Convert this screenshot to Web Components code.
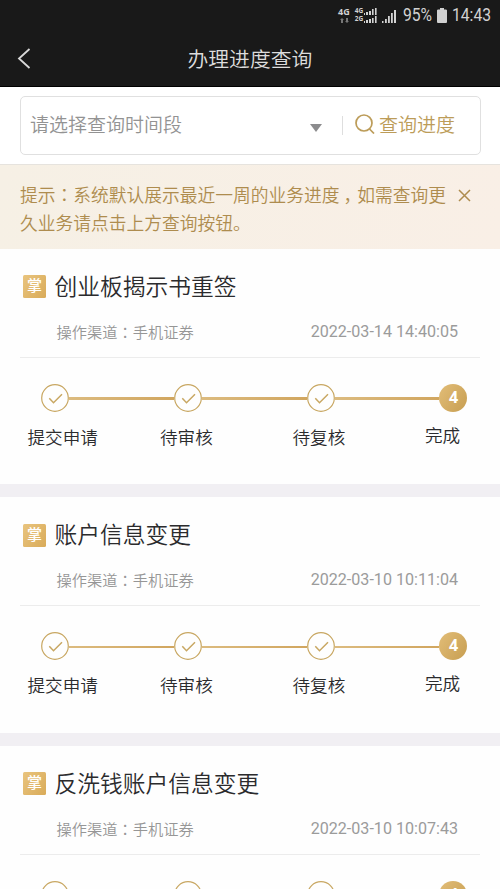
<!DOCTYPE html>
<html lang="zh-CN">
<head>
<meta charset="utf-8">
<title>办理进度查询</title>
<style>
html,body{margin:0;height:889px;overflow:hidden;background:#fefefe}
body{font-family:Roboto,"Noto Sans CJK SC",sans-serif;color:#2b2b2d}
</style>
</head>
<body>
<progress-app></progress-app>
<script>
const define = (name, html, setup) => customElements.define(name, class extends HTMLElement {
  connectedCallback() {
    if (this.shadowRoot) return;
    const t = document.createElement('template');
    t.innerHTML = html;
    this.attachShadow({mode: 'open'}).append(t.content.cloneNode(true));
    if (setup) setup(this, this.shadowRoot);
  }
});

define('status-bar', `
<style>
:host{display:flex;height:30px;box-sizing:border-box;padding:0 9px 0 338px;align-items:center;color:#d2d2d2;font-size:18px;line-height:30px;white-space:nowrap}
svg{display:block;flex:none}
.net{width:13px;font:700 9px/10px "Open Sans",sans-serif;margin-top:-1px}
.net svg{margin:1px 0 0 2px}
.dual{width:10px;margin-left:5px;font:700 6.5px/8px "Open Sans",sans-serif}
.pct{width:29px;margin-left:6px}.time{margin-left:6px}
.fit{display:inline-block;transform-origin:0 50%;transform:scaleX(.87)}
</style>
<div class="net">4G<svg width="9" height="5" viewBox="0 0 9 5" fill="#777"><path d="M2 0 4 2H3v3H1V2H0zM6 0h2v3h1L7 5 5 3h1z"/></svg></div>
<div class="dual">4G<br>2G</div>
<svg width="14" height="17" viewBox="0 0 14 17" fill="#d2d2d2"><path d="M1 6h1v2H1zM3 5h2v3H3zM6 4h2v4H6zM9 2h1.6v6H9zM12 1h1.6v7H12zM1 14h1v2H1zM3 13h2v3H3zM6 12h2v4H6zM9 11h1.6v5H9zM12 9h1.6v7H12z"/></svg>
<svg style="margin-left:5px" width="15" height="17" viewBox="0 0 15 17" fill="#d2d2d2"><path d="M0 14h1.500v2H0zM3 12h1.800v4H3zM6 9h1.800v7H6zM9 6h1.800v10H9zM12 3h2v13H12z"/></svg>
<div class="pct"><span class="fit">95%</span></div>
<svg style="margin-left:5px" width="10" height="15" viewBox="0 0 10 15" fill="#d0d0d0"><path d="M3 0h4v1.5h2.2l.8.8v12l-.7.7H.7L0 14.300V2.300l.8-.8H3z"/></svg>
<div class="time" style="margin-left:5px"><span class="fit">14:43</span></div>`);

define('nav-bar', `
<style>
:host{display:flex;height:57px;align-items:center;color:#ddd}
svg{margin-left:17px;display:block;flex:none}
h1{font-size:20.8px;font-weight:350;line-height:30px;margin:2px 0 0 156.5px;white-space:nowrap}
</style>
<svg width="14" height="22" viewBox="0 0 14 22" fill="none" stroke="#d8d8d8" stroke-width="1.8"><path d="M12.500 1 2 10.500l10.500 9.500"/></svg>
<h1><slot></slot></h1>`);

define('search-box', `
<style>
:host{display:block;padding:9px 19px 9px 20px;border-bottom:1px solid #e6e3de;background:#fff}
.box{display:flex;align-items:center;height:57px;border:1px solid #e0e0e0;border-radius:5px;font-size:19px;line-height:28px;font-weight:350;white-space:nowrap;color:#939393}
.ph{width:280px;padding-left:9px}
.tri{width:0;border:6px solid transparent;border-top:8px solid #8c8c8e;border-bottom:0;margin:4px 0 0}
.sep{width:1px;height:19px;background:#dedede;margin:0 12px 0 19.500px}
.go{color:#bc9c59;margin-left:4.500px}
svg{display:block;margin-top:-3px}
</style>
<div class="box"><div class="ph">请选择查询时间段</div><div class="tri"></div><div class="sep"></div>
<svg width="20" height="20" viewBox="0 0 20 20" fill="none" stroke="#bc9c59" stroke-width="1.7"><circle cx="9" cy="9" r="8"/><path d="m14.500 15 4.500 4.500"/></svg>
<div class="go">查询进度</div></div>`);

define('notice-bar', `
<style>
:host{display:flex;height:84px;box-sizing:border-box;padding:15px 20px 0;background:linear-gradient(100deg,#f6f0e5,#f9efe6);color:#ae8c4e;font-size:17.75px;line-height:28px;font-weight:350}
p{margin:0;width:438px;white-space:nowrap}
.p{font-family:"Noto Sans CJK TC",sans-serif}
.comma{display:inline-block;transform:translateX(4px)}
svg{display:block;margin-top:9px;flex:none}
</style>
<p>提示<span class="p" lang="zh-TW">：</span>系统默认展示最近一周的业务进度<span class="comma">，</span>如需查询更<br>久业务请点击上方查询按钮。</p>
<svg width="13" height="13" viewBox="0 0 13 13" stroke="#ae8c4e" stroke-width="1.5"><path d="m1 1 11 11M12 1 1 12"/></svg>`);

define('step-node', `
<style>
:host{display:block;width:28px;height:28px;flex:none}
svg{display:block}
.n{width:28px;height:28px;border-radius:50%;background:linear-gradient(125deg,#e2bd78,#c79e51);color:#fff;font:700 16px/27px "Open Sans",sans-serif;text-align:center}
</style>`, (el, root) => {
  const n = el.getAttribute('number');
  root.innerHTML += n ? `<div class="n">${n}</div>` :
    `<svg width="28" height="28" viewBox="0 0 28 28" fill="none" stroke="#c8a762"><circle cx="14" cy="14" r="13.300" stroke-width="1.200"/><path d="m8.300 14.200 4.200 4.500 8.500-8.500" stroke-width="1.500"/></svg>`;
});

define('step-track', `
<style>
:host{display:block;padding:26px 12.500px 0 21px}
.line{display:flex;align-items:center}
i{flex:1;height:2.500px;margin-top:2px;background:linear-gradient(90deg,#dcbb7f,#d1a65f)}
.labels{display:grid;grid-template-columns:132.5px 132.5px 132.500px 40px;margin:12px 0 0 -13.5px;font-size:17.6px;line-height:28px;font-weight:350;white-space:nowrap}
.labels :last-child{margin-top:-2px}
:host([collapsed]) .labels{display:none}
</style>
<div class="line"><step-node></step-node><i></i><step-node></step-node><i></i><step-node></step-node><i></i><step-node number="4"></step-node></div>
<div class="labels"><span>提交申请</span><span>待审核</span><span>待复核</span><span>完成</span></div>`);

define('progress-card', `
<style>
:host{display:block;height:248.5px;box-sizing:border-box;padding:21px 20px 0;border-bottom:13px solid #f1eff3;background:#fefefe}
.head{display:flex;align-items:center;height:34px;padding-left:3px}
.badge{width:23px;height:23px;border-radius:1.5px;background:linear-gradient(125deg,#e9c47e,#d9ab59);color:#fff;font-size:15px;line-height:23px;text-align:center;font-weight:500}
h2{font-size:22.750px;line-height:34px;margin:2px 0 0 8.500px;font-weight:350;white-space:nowrap}
.meta{display:flex;justify-content:space-between;padding:0 22px 0 36.500px;margin-top:15px;height:24px;font-size:15.25px;line-height:24px;color:#969696;font-weight:350;white-space:nowrap}
.date{font-size:16.100px;font-weight:400;color:#9b9b9b;margin-top:1px}
.p{font-family:"Noto Sans CJK TC",sans-serif}
hr{border:0;height:1px;background:#ececec;margin:14px 0 0}
</style>
<div class="head"><div class="badge">掌</div><h2><slot></slot></h2></div>
<div class="meta"><span>操作渠道<span class="p" lang="zh-TW">：</span>手机证券</span><span class="date"></span></div>
<hr><step-track></step-track>`, (el, root) => {
  root.querySelector('.date').textContent = el.getAttribute('date');
  root.querySelector('step-track').toggleAttribute('collapsed', el.hasAttribute('collapsed'));
});

define('progress-app', `
<style>
:host{display:block;width:500px;height:889px;overflow:hidden}
header{background:#191919;border-bottom:1px solid #000;height:87px;box-sizing:border-box}
notice-bar{margin-bottom:-.5px}
</style>
<header><status-bar></status-bar><nav-bar>办理进度查询</nav-bar></header>
<search-box></search-box>
<notice-bar></notice-bar>
<progress-card date="2022-03-14 14:40:05">创业板揭示书重签</progress-card>
<progress-card date="2022-03-10 10:11:04">账户信息变更</progress-card>
<progress-card date="2022-03-10 10:07:43" collapsed>反洗钱账户信息变更</progress-card>`);
</script>
</body>
</html>
